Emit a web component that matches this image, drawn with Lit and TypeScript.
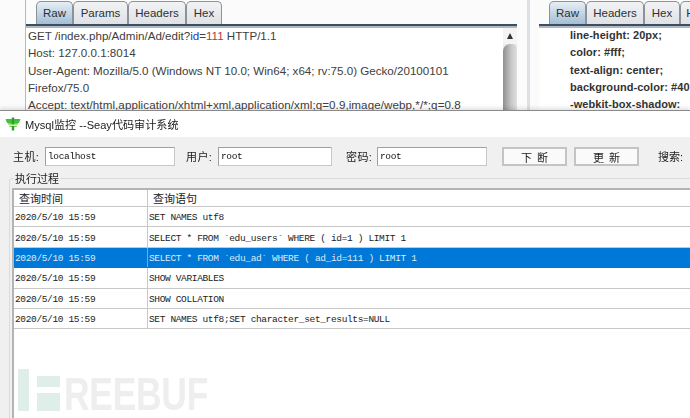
import { LitElement, html, css } from "lit";
import { customElement } from "lit/decorators.js";

const rows = [
  "SET NAMES utf8",
  "SELECT * FROM `edu_users` WHERE ( id=1 ) LIMIT 1",
  "SELECT * FROM `edu_ad` WHERE ( ad_id=111 ) LIMIT 1",
  "SHOW VARIABLES",
  "SHOW COLLATION",
  "SET NAMES utf8;SET character_set_results=NULL",
];

@customElement("app-root")
export class AppRoot extends LitElement {
  static styles = css`
    :host { display: block; width: 690px; height: 418px; overflow: hidden; background: #fff; font-family: "Liberation Sans", "Noto Sans CJK SC", sans-serif; }
    .page { width: 690px; height: 418px; display: flex; flex-direction: column; filter: blur(0.4px); }
    .burp { height: 110px; flex: none; display: flex; background: #fbfbfb; overflow: hidden; padding-left: 25px; box-sizing: border-box; }
    .left { width: 492px; flex: none; display: flex; flex-direction: column; border-left: 1px solid #b9b9b9; box-sizing: border-box; }
    .gutter { width: 3px; flex: none; margin: 0 9px 0 10px; background: #dfe0e6; }
    .right { flex: 1; display: flex; flex-direction: column; min-width: 0; }
    .tabs { height: 24px; flex: none; display: flex; align-items: flex-end; padding-left: 10px; overflow: hidden; }
    .rule { height: 4px; flex: none; background: linear-gradient(#3e4d60 50%, #aeb9c6 50%); }
    .tab { flex: none; height: 23px; box-sizing: border-box; border: 1px solid #8d9198; border-bottom: 0; border-radius: 5px 5px 0 0; background: linear-gradient(#f2f3f5, #dfe1e5); font-size: 11.5px; color: #2b3038; display: flex; align-items: center; justify-content: center; }
    .tab.on { background: linear-gradient(#e6eef5, #a3bed4); }
    .w-raw { width: 37px; } .w-params { width: 55px; } .w-headers { width: 58px; } .w-hex { width: 36px; } .w-html { width: 44px; }
    .body { flex: 1; display: flex; background: #fff; min-height: 0; overflow: hidden; }
    .text { flex: 1; min-width: 0; margin-top: -1px; padding-left: 2px; font-size: 11.6px; line-height: 17.3px; color: #404040; white-space: nowrap; overflow: hidden; }
    .wide { letter-spacing: 0.08px; }
    .k { color: #2b33c4; } .v { color: #b33a3a; }
    .scroll { width: 14px; flex: none; background: #ececec; display: flex; flex-direction: column; }
    .scroll .btn { height: 16px; flex: none; background: #f4f4f4; display: flex; justify-content: center; align-items: center; }
    .scroll .tri { width: 0; height: 0; border: 3px solid transparent; border-top: 0; border-bottom: 6px solid #333; }
    .scroll .thumb { flex: 1; background: linear-gradient(90deg, #8f8f8f, #c8c8c8 60%, #e0e0e0); border-radius: 7px 5px 0 0; }
    .css { flex: 1; margin-top: -1px; padding-left: 31px; font-size: 11px; line-height: 17.3px; font-weight: 700; color: #333; letter-spacing: 0.05px; white-space: nowrap; overflow: hidden; }

    .win { flex: 1; display: flex; flex-direction: column; background: #f0f0f0; border-top: 1px solid #8a8a8a; min-height: 0; box-shadow: 0 -2px 4px rgba(0,0,0,.12); position: relative; }
    .title { height: 26px; flex: none; background: #fff; display: flex; align-items: center; gap: 4px; padding-left: 5px; font-size: 11.1px; color: #222; }
    .bar { height: 39px; flex: none; display: flex; align-items: center; padding-left: 13px; font-size: 11px; color: #222; }
    .field { display: flex; align-items: center; }
    .lbl { width: 27px; flex: none; white-space: nowrap; letter-spacing: 0.4px; padding-bottom: 2px; }
    .in { height: 19px; margin-left: 5px; box-sizing: border-box; border: 1px solid #a0a0a0; border-right-color: #c8c8c8; border-bottom-color: #c8c8c8; background: #fff; font-family: "Liberation Mono", monospace; font-size: 9.5px; letter-spacing: -0.35px; padding-left: 2px; line-height: 17px; color: #111; }
    .in.host { width: 130px; } .in.user { width: 114px; } .in.pass { width: 110px; margin-left: 4px; }
    .f2 { margin-left: 11px; } .f3 { margin-left: 14px; }
    .b { width: 65px; height: 19px; flex: none; box-sizing: border-box; border: 2px solid #c4c4c4; background: #fafafa; font-size: 11px; display: flex; align-items: center; justify-content: center; word-spacing: 2px; color: #222; }
    .b1 { margin-left: 15px; } .b2 { margin-left: 7px; }
    .search { margin-left: 19px; white-space: nowrap; padding-bottom: 1px; }
    .group { flex: 1; display: flex; flex-direction: column; margin: 2px 0 0 9px; position: relative; min-height: 0; border-top: 1px solid #dcdcdc; border-left: 1px solid #dcdcdc; border-top-left-radius: 3px; }
    .legend { position: absolute; left: 4px; top: -6px; background: #f0f0f0; padding: 0 1px; font-size: 11px; line-height: 13px; color: #222; }
    .table { flex: 1; margin: 9px 0 0 2px; background: #fff; border-left: 2px solid #b4b4b4; border-top: 2px solid #b4b4b4; display: flex; flex-direction: column; font-family: "Liberation Mono", monospace; font-size: 9.5px; letter-spacing: -0.35px; color: #222; position: relative; }
    .row { height: 20.4px; flex: none; display: grid; grid-template-columns: 133px 1fr; box-sizing: border-box; border-bottom: 1.5px solid #c8c8c8; }
    .row > div { padding: 2px 0 0 1px; display: flex; align-items: center; white-space: pre; }
    .row > div:last-child { border-left: 1px solid #c8c8c8; padding-left: 1px; }
    .head { height: 17px; font-family: "Liberation Sans", "Noto Sans CJK SC", sans-serif; font-size: 11px; letter-spacing: 0; }
    .head > div { padding-left: 5px; padding-top: 0; }
    .head > div:last-child { padding-left: 5px; }
    .row.sel { background: #0078d7; color: #dcebf9; border-bottom-color: #0078d7; }
    .row.sel > div:last-child { border-left-color: #6aaee6; }
    .wm { position: absolute; left: 4px; bottom: 7px; display: flex; align-items: flex-end; }
    .wm .i { width: 11px; height: 42px; background: #e0eee9; }
    .wm .f { width: 23px; height: 35px; margin-left: 8px; display: flex; flex-direction: column; gap: 6px; }
    .wm .f span { background: #e0eee9; display: block; }
    .wm .f span:first-child { height: 11px; } .wm .f span:last-child { flex: 1; }
    .wm .t { font-family: "Liberation Sans", sans-serif; font-weight: 700; font-size: 46px; line-height: 33px; height: 33px; color: #eeeeee; margin-left: 4px; transform: scaleX(0.77); transform-origin: left bottom; white-space: nowrap; }
  `;

  render() {
    return html`<div class="page">
      <div class="burp">
        <div class="left">
          <div class="tabs">
            <div class="tab on w-raw">Raw</div><div class="tab w-params">Params</div><div class="tab w-headers">Headers</div><div class="tab w-hex">Hex</div>
          </div>
          <div class="rule"></div>
          <div class="body">
            <div class="text">
              <div>GET /index.php/Admin/Ad/edit?<span class="k">id</span>=<span class="v">111</span> HTTP/1.1</div>
              <div>Host: 127.0.0.1:8014</div>
              <div>User-Agent: Mozilla/5.0 (Windows NT 10.0; Win64; x64; rv:75.0) Gecko/20100101</div>
              <div>Firefox/75.0</div>
              <div class="wide">Accept: text/html,application/xhtml+xml,application/xml;q=0.9,image/webp,*/*;q=0.8</div>
            </div>
            <div class="scroll"><div class="btn"><div class="tri"></div></div><div class="thumb"></div></div>
          </div>
        </div>
        <div class="gutter"></div>
        <div class="right">
          <div class="tabs">
            <div class="tab on w-raw">Raw</div><div class="tab w-headers">Headers</div><div class="tab w-hex">Hex</div><div class="tab w-html">HTML</div>
          </div>
          <div class="rule"></div>
          <div class="body">
            <div class="css">
              <div>line-height: 20px;</div><div>color: #fff;</div><div>text-align: center;</div><div>background-color: #40</div><div>-webkit-box-shadow:</div>
            </div>
          </div>
        </div>
      </div>
      <div class="win">
        <div class="title">
          <svg width="16" height="16" viewBox="0 0 16 16"><path d="M0.500 3h15l-1.500 4H2z" fill="#46c03a"/><path d="M3 7h10l-1.500 4h-7z" fill="#6fd24a"/><path d="M6.800 1.500h2.400v13H6.800z" fill="#2f9e2a"/><path d="M4 8.500h8V10H4z" fill="#d9f5b8"/></svg>
          <span>Mysql监控 --Seay代码审计系统</span>
        </div>
        <div class="bar">
          <div class="field"><span class="lbl">主机:</span><div class="in host">localhost</div></div>
          <div class="field f2"><span class="lbl">用户:</span><div class="in user">root</div></div>
          <div class="field f3"><span class="lbl">密码:</span><div class="in pass">root</div></div>
          <div class="b b1">下 断</div>
          <div class="b b2">更 新</div>
          <div class="search">搜索:</div>
        </div>
        <div class="group">
          <div class="legend">执行过程</div>
          <div class="table">
            <div class="row head"><div>查询时间</div><div>查询语句</div></div>
            ${rows.map((r, i) => html`<div class="row ${i === 2 ? "sel" : ""}"><div>2020/5/10 15:59</div><div>${r}</div></div>`)}
            <div class="wm"><div class="i"></div><div class="f"><span></span><span></span></div><div class="t">REEBUF</div></div>
          </div>
        </div>
      </div>
    </div>`;
  }
}
